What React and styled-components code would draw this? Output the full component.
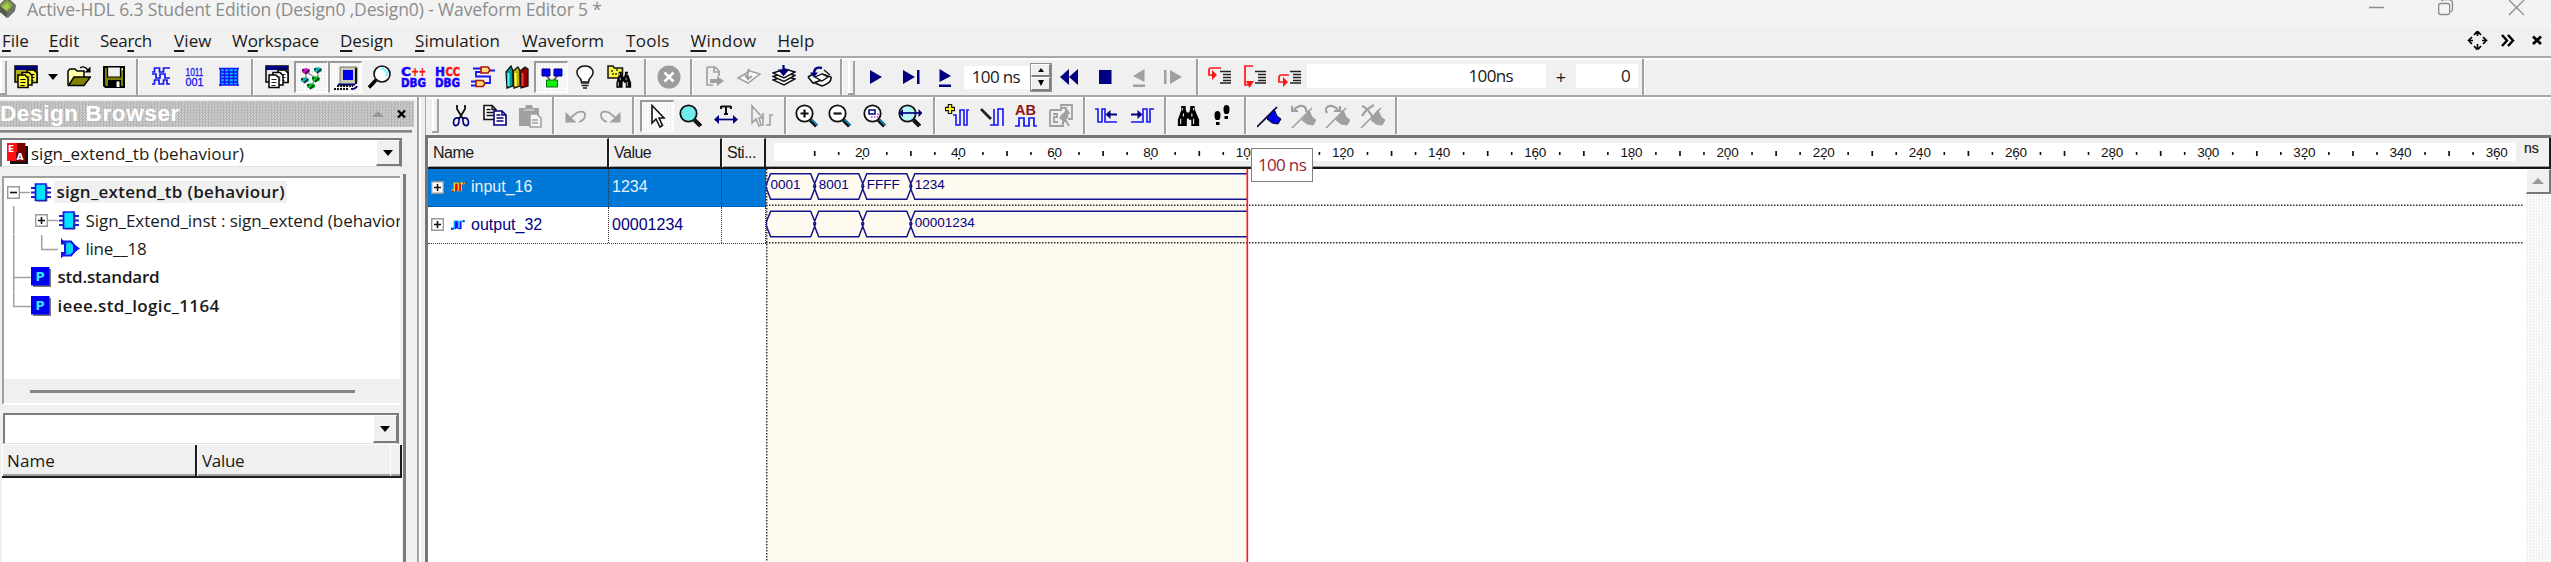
import React from 'react';
import styled, { createGlobalStyle, css } from 'styled-components';

const NAVY = '#000080';
const BLUE = '#1414f5';
const GREY = '#a0a0a0';
const UI = '"Open Sans", "Noto Sans", sans-serif';
const ARIAL = '"Liberation Sans", Arial, sans-serif';

const Global = createGlobalStyle`
  * { box-sizing: border-box; }
  body { margin: 0; background: #f0f0f0; }
  svg { display: block; flex-shrink: 0; }
`;

const dither = css`
  background: repeating-conic-gradient(#f0f0f0 0 25%, #fff 0 50%) 0 0 / 3px 3px;
`;

/* ---------- frame ---------- */
const Frame = styled.div`
  width: 100%;
  height: 562px;
  display: flex;
  flex-direction: column;
  overflow: hidden;
  background: #f0f0f0;
  font: 17px ${UI};
  color: #1a1a1a;
  white-space: pre;
`;
const TitleBar = styled.header`
  flex: 0 0 26px;
  display: flex;
  align-items: flex-start;
  background: #f3f3f3;
  color: #8c8c8c;
`;
const TitleIcon = styled.div`
  width: 27px;
  height: 20px;
`;
const TitleText = styled.div`
  flex: 1;
  font-size: 17.5px;
  line-height: 18px;
  letter-spacing: -0.13px;
`;
const Controls = styled.div`
  display: flex;
  width: 200px;
  height: 20px;
`;
const MenuBar = styled.nav`
  flex: 0 0 30px;
  display: flex;
  align-items: center;
  padding-left: 2px;
  line-height: 30px;
`;
const MenuItem = styled.div`
  width: ${(p) => p.$w}px;
  letter-spacing: ${(p) => p.$ls || 0}px;
  u { text-decoration-thickness: 1.5px; text-underline-offset: 3px; }
`;
const MenuTail = styled.div`
  margin-left: auto;
  width: 93px;
  height: 30px;
`;

/* ---------- toolbars ---------- */
const Bar = styled.div`
  flex: 0 0 ${(p) => p.$h}px;
  display: flex;
  align-items: center;
  border-top: 2px solid #a8a8a8;
  box-shadow: inset 0 2px 0 #fff;
  padding-top: 1px;
`;
const Slot = styled.div`
  flex: 0 0 ${(p) => p.$w}px;
  align-self: stretch;
  display: flex;
  align-items: center;
  justify-content: center;
`;
const Pressed = styled(Slot)`
  align-self: center;
  height: 32px;
  ${dither}
  border: solid #fff;
  border-top-color: #9a9a9a;
  border-left-color: #9a9a9a;
  border-width: 2px 1px 1px 2px;
`;
const Sep = styled.div`
  flex: 0 0 ${(p) => p.$w}px;
  align-self: stretch;
  display: flex;
  justify-content: center;
  &::after {
    content: '';
    width: 3px;
    background: linear-gradient(90deg, #a0a0a0 0 2px, #fff 2px 3px);
  }
`;
const Grip = styled.div`
  flex: 0 0 ${(p) => p.$w}px;
  height: 33px;
  padding-left: ${(p) => p.$pad}px;
  &::after {
    content: '';
    display: block;
    width: 5px;
    height: 32px;
    border: solid #a0a0a0;
    border-width: 0 2px 2px 0;
    box-shadow: inset 2px 0 0 #fff;
  }
`;
const Field = styled.div`
  flex: 0 0 ${(p) => p.$w}px;
  height: ${(p) => p.$h}px;
  margin-bottom: ${(p) => p.$lift || 0}px;
  padding-right: ${(p) => p.$pr}px;
  background: #fff;
  text-align: right;
  line-height: ${(p) => p.$h - 1}px;
  letter-spacing: -0.65px;
`;
const Plus = styled(Slot)`
  font-size: 18px;
`;
const Spinner = styled.div`
  flex: 0 0 22px;
  display: flex;
  flex-direction: column;
  height: 29px;
  border: 1px solid #909090;
`;
const SpinHalf = styled.div`
  flex: 1;
  display: flex;
  align-items: center;
  justify-content: center;
  border: 1px solid #fff;
  border-right: 2px solid #808080;
  border-bottom: 2px solid #808080;
`;

/* ---------- body ---------- */
const Body = styled.div`
  flex: 1;
  display: flex;
  min-height: 0;
  border-top: 2px solid #a8a8a8;
`;
const Sidebar = styled.aside`
  flex: 0 0 417px;
  display: flex;
  flex-direction: column;
  border-top: 2px solid #fff;
`;
const PanelTitle = styled.div`
  width: 414px;
  height: 26px;
  margin-top: 2px;
  display: flex;
  align-items: center;
  background: repeating-conic-gradient(#b4b4b4 0 25%, #cecece 0 50%) 0 0 / 3px 3px;
`;
const PanelName = styled.div`
  flex: 1;
  font: bold 22.5px/26px ${ARIAL};
  letter-spacing: 0.62px;
  color: #fff;
`;
const PanelRule = styled.div`
  width: 412px;
  height: 3px;
  margin: 3px 0 5px;
  background: #858585;
  border-bottom: 1px solid #a8a8a8;
`;
const Combo = styled.div`
  width: ${(p) => p.$w}px;
  height: ${(p) => p.$h}px;
  margin-left: ${(p) => p.$ml}px;
  margin-top: ${(p) => p.$mt || 0}px;
  display: flex;
  align-items: center;
  background: #fff;
  border: 2px solid #7c7c7c;
  border-bottom: 1px solid #e3e3e3;
`;
const ComboText = styled.div`
  flex: 1;
  padding-left: 3px;
`;
const ComboIcon = styled.div`
  display: flex;
  padding-left: 5px;
`;
const DropButton = styled.div`
  width: 24px;
  align-self: stretch;
  display: flex;
  align-items: center;
  justify-content: center;
  background: #f0f0f0;
  border: solid #fff;
  border-width: 1px 0 0 1px;
  border-right: 1px solid #7c7c7c;
  border-bottom: 2px solid #7c7c7c;
`;
const Panes = styled.div`
  flex: 1;
  width: 406px;
  margin-top: 7px;
  display: flex;
  flex-direction: column;
  border-right: 3px solid #7c7c7c;
`;
const Tree = styled.div`
  width: 398px;
  height: 229px;
  margin: 2px 0 0 2px;
  border-top: 2px solid #a0a0a0;
  border-left: 2px solid #a0a0a0;
  border-bottom: 2px solid #fff;
  background: #fff;
  overflow: hidden;
  display: flex;
  flex-direction: column;
`;
const TreeRows = styled.div`
  flex: 1;
`;
const TreeRow = styled.div`
  display: flex;
  align-items: center;
  height: 28.4px;
  overflow: hidden;
`;
const TreeLabel = styled.div`
  height: 22px;
  line-height: 21px;
  padding: 0 2.5px;
  font-weight: ${(p) => (p.$bold ? 600 : 400)};
  letter-spacing: ${(p) => p.$ls || 0}px;
  background: ${(p) => (p.$hot ? '#f0f0f0' : 'transparent')};
`;
const HScroll = styled.div`
  flex: 0 0 24px;
  display: flex;
  align-items: center;
  padding-left: 26px;
  background: #f0f0f0;
  &::after {
    content: '';
    width: 325px;
    height: 3px;
    background: #868686;
  }
`;
const WatchHead = styled.div`
  width: 400px;
  height: 34px;
  margin: 0 0 0 2px;
  display: flex;
  border-bottom: 2px solid #1c1c1c;
  border-top: 1px solid #fff;
`;
const WatchCell = styled.div`
  width: ${(p) => p.$w}px;
  padding-left: ${(p) => (p.$w > 20 ? 4 : 0)}px;
  line-height: 31px;
  letter-spacing: ${(p) => p.$ls || 0}px;
  border-left: 1px solid #fff;
  border-right: ${(p) => (p.$open ? 0 : 2)}px solid #1c1c1c;
  box-shadow: inset 0 -2px 0 #a0a0a0;
`;
const WatchBody = styled.div`
  flex: 1;
  width: 400px;
  margin-left: 2px;
  background: #fff;
`;
const Splitter = styled.div`
  flex: 0 0 8px;
  border-left: 2px solid #a4a4a4;
  box-shadow: inset 2px 0 0 #fff;
`;
const Main = styled.main`
  flex: 1;
  display: flex;
  flex-direction: column;
  min-width: 0;
`;
const MainTools = styled(Bar)`
  border-top: 0;
  border-left: 1px solid #a4a4a4;
  padding: 0 0 1px;
`;
const Editor = styled.section`
  flex: 1;
  min-height: 0;
  display: flex;
  flex-direction: column;
  border-top: 3px solid #757575;
  border-left: 3px solid #757575;
  background: #fff;
`;
const Head = styled.div`
  flex: 0 0 31px;
  height: 31px;
  display: flex;
  background: #f0f0f0;
  border-bottom: 2px solid #161616;
  box-shadow: inset 0 -1px 0 #a0a0a0;
  font: 16px/28px ${ARIAL};
`;
const HeadCell = styled.div`
  flex: 0 0 ${(p) => p.$w}px;
  padding-left: 4px;
  letter-spacing: -0.5px;
  border-left: 1px solid #fff;
  border-top: 1px solid #fff;
  border-right: 2px solid #1c1c1c;
`;
const RulerArea = styled.div`
  flex: 1;
  display: flex;
  align-items: flex-start;
  padding: 5px 0 0 8px;
  border-right: 2px solid #1c1c1c;
`;
const Unit = styled.div`
  padding-left: 8px;
  font: 14px/10px ${ARIAL};
  -webkit-text-stroke: 0.2px;
`;
const Grid = styled.div`
  flex: 1;
  display: flex;
  min-height: 0;
`;
const Names = styled.div`
  flex: 0 0 338px;
`;
const Signal = styled.div`
  height: 37.5px;
  display: flex;
  font: 16px/36px ${ARIAL};
  color: ${(p) => (p.$on ? '#e6f1fb' : NAVY)};
  background: ${(p) => (p.$on ? '#0078d7' : '#fff')};
  border-bottom: 1.5px dotted #333;
`;
const SignalCell = styled.div`
  flex: 0 0 ${(p) => p.$w}px;
  display: flex;
  align-items: center;
  padding-left: 3px;
  border-right: 1.5px dotted #333;
`;
const SignalName = styled.div`
  padding-left: 6px;
`;
const Canvas = styled.div`
  flex: 1;
  min-width: 0;
  height: 392px;
`;
const VScroll = styled.div`
  flex: 0 0 25px;
  ${dither}
  background-color: #f0f0f0;
`;
const ScrollUp = styled.div`
  height: 25px;
  display: flex;
  align-items: center;
  justify-content: center;
  background: #f0f0f0;
  border: 1px solid #fff;
  border-right: 2px solid #777;
  border-bottom: 2px solid #777;
`;
const Anchor = styled.div`
  position: relative;
  width: 0;
  height: 0;
`;
const CursorTip = styled.div`
  position: absolute;
  left: 485px;
  top: -21px;
  width: 62px;
  height: 34px;
  border: 1.5px solid #808080;
  background: #fff;
  color: #9c1c34;
  text-align: center;
  line-height: 32px;
  letter-spacing: -0.65px;
  z-index: 2;
`;

/* ---------- icons ---------- */
const Svg = ({ w = 24, h = 24, children, ...r }) => (
  <svg width={w} height={h} viewBox={`0 0 ${w} ${h}`} fill="none" {...r}>{children}</svg>
);
const Down = ({ s = 10 }) => <Svg w={s} h={6}><path d={`M0 0H${s}L${s / 2} 6Z`} fill="#000" /></Svg>;

const Sheets = ({ fill, back }) => (
  <Svg>
    <path d="M1 1H23V17H1Z" fill={back} stroke="#000" strokeWidth="1.5" />
    <path d="M1 1H23V5H1Z" fill={NAVY} />
    {[[13, 5], [8, 7.5], [4, 10]].map(([x, y]) => (
      <g key={x}>
        <path d={`M${x} ${y}h7l3 3v9.5h-10z`} fill={fill} stroke="#000" strokeWidth="1.5" />
        <path d={`M${x + 2.5} ${y + 4.5}h5m-5 3h5m-5 3h4`} stroke={fill === '#fff' ? '#223' : '#000'} strokeWidth="1.1" />
      </g>
    ))}
  </Svg>
);
const NewIcon = () => <Sheets fill="#fbf53c" back="#b5ad1c" />;
const DocsIcon = () => <Sheets fill="#fff" back="#e8e8ee" />;
const OpenIcon = () => (
  <Svg>
    <path d="M1 20V6l2-2h5l2 2h7v6" fill="#ffffa8" stroke="#000" strokeWidth="1.5" />
    <path d="M1.5 20.5L7 12h16.5L17 20.5Z" fill="#808000" stroke="#000" strokeWidth="1.5" />
    <path d="M13 3q4-3 8 2" stroke="#000" strokeWidth="1.4" /><path d="M23.5 1.500v6h-6z" fill="#000" />
  </Svg>
);
const SaveIcon = () => (
  <Svg>
    <path d="M2 2H22V22H3.500L2 20.500Z" fill="#808000" stroke="#000" strokeWidth="2" />
    <path d="M5.500 2H18.500V12H5.500Z" fill="#f0f0f0" stroke="#000" strokeWidth="1.2" />
    <path d="M6 15H19V22H6Z" fill="#000" /><path d="M14.500 16.500h3V22h-3z" fill="#fff" /><path d="M19.500 3.500h1.500v1.500h-1.500z" fill="#fff" />
  </Svg>
);
const WavesIcon = () => (
  <Svg w={20} h={20}>
    <path d="M1 5H3.500V1H8.500V5H12.500V1H19M1 7H5V11H9V7H14V11H19M1 17H3.500V13H8V17H12.500V13H16V17H19" stroke={BLUE} strokeWidth="1.700" />
  </Svg>
);
const BitsIcon = () => (
  <Svg w={20} h={20}>
    <g fill={BLUE} fontFamily="Liberation Sans" fontSize="11">
      <text x="0.500" y="8.500" textLength="18" lengthAdjust="spacingAndGlyphs" stroke={BLUE} strokeWidth="0.300">1011</text>
      <text x="0.500" y="18.500" textLength="18" lengthAdjust="spacingAndGlyphs" stroke={BLUE} strokeWidth="0.300">001</text>
    </g>
  </Svg>
);
const TableIcon = () => (
  <Svg w={20} h={20}>
    <path d="M1 1H19V18H1Z" fill="#00c0f8" />
    <path d="M0 1.500H20M1 5H19M1 8.300H19M1 11.600H19M1 15H19M0 18H20M1.500 1V19M5.500 1V18M10 1V18M14.500 1V18M18.500 1V19" stroke={BLUE} strokeWidth="1.500" />
  </Svg>
);
const Blob = ({ x, y, c }) => (
  <g><ellipse cx={x} cy={y} rx="4" ry="2.700" fill={c} /><path d={`M${x - 1} ${y + 3}l4-4M${x - 4} ${y - 1}h2`} stroke="#111" strokeWidth="1.300" /></g>
);
const FlowIcon = () => (
  <Svg>
    <path d="M6 6L16 12M6 6V14M18 5V13M16 13L11 20" stroke="#888" strokeWidth="1.200" />
    <Blob x={6} y={5} c="#d010d0" /><Blob x={18} y={4} c="#10b0b0" /><Blob x={5} y={14} c="#10b0b0" /><Blob x={16} y={13} c="#00c020" /><Blob x={11} y={20} c="#00c020" />
  </Svg>
);
const ComputerIcon = () => (
  <Svg>
    <path d="M6 1H23V17L20 19H6Z" fill="#c9c9b4" stroke="#777" />
    <path d="M22 2V18" stroke="#111" strokeWidth="2" />
    <path d="M9 4H19V14H9Z" fill="#0000f0" />
    <path d="M4 18.500H21" stroke={NAVY} strokeWidth="2" />
    <path d="M3 20H19M0 23H15" stroke="#111" strokeWidth="2" strokeDasharray="2 1" />
    <path d="M17 23q5 0 6-3" stroke={NAVY} strokeWidth="2" />
  </Svg>
);
const LensIcon = () => (
  <Svg>
    <circle cx="15" cy="9" r="8" fill="#fff" stroke="#111" strokeWidth="1.600" />
    <path d="M15 3l5 4v4" stroke="#4ff" strokeWidth="2.500" strokeDasharray="2 1" />
    <path d="M9 15L2 22.500" stroke="#000" strokeWidth="3.500" />
  </Svg>
);
const DebugIcon = ({ first, rest }) => (
  <Svg w={26} h={24}>
    <g fontFamily="DejaVu Sans" fontWeight="bold" strokeWidth="0.500">
      <text x="0" y="10.500" fontSize="13" fill="#1400ff" stroke="#1400ff" textLength="10" lengthAdjust="spacingAndGlyphs">{first}</text>
      <text x="10.500" y="10.500" fontSize="12.500" fill="#ff1010" stroke="#ff1010" textLength="14.500" lengthAdjust="spacingAndGlyphs">{rest}</text>
      <text x="0" y="22" fontSize="11.500" fill="#1400ff" stroke="#1400ff" textLength="25" lengthAdjust="spacingAndGlyphs">DBG</text>
    </g>
  </Svg>
);
const CircuitIcon = () => (
  <Svg>
    <path d="M2 3.500h9M17 5.500h7M10 7H5V11.500H19V18H13M0 16.500h5M0 20.500h5" stroke={BLUE} strokeWidth="1.800" />
    <path d="M10 2h7l2 3-2 3h-7zM5 15.500h7l2 3-2 3h-7z" fill="#ffe070" stroke="#b01010" strokeWidth="1.600" />
  </Svg>
);
const BooksIcon = () => (
  <Svg>
    <path d="M1 7L6 1l2 5v15l-6 2z" fill="#009898" stroke="#111" strokeWidth="1.300" /><path d="M3.500 8v13" stroke="#5ff" strokeWidth="2" />
    <path d="M8 6l5-4 2 4v15l-6 2z" fill="#c0b000" stroke="#111" strokeWidth="1.300" /><path d="M10.500 8v13" stroke="#ff6" strokeWidth="2" />
    <path d="M15 6l5-4 3 2v17l-7 2z" fill="#900000" stroke="#111" strokeWidth="1.300" /><path d="M17.500 8v13" stroke="#f33" strokeWidth="2" />
  </Svg>
);
const BlocksIcon = () => (
  <Svg>
    <path d="M6 9L10 14M18 9L14 14" stroke="#555" strokeWidth="1.500" />
    <path d="M2 3h8v7H2zM14 3h8v7h-8z" fill="#0000f0" stroke={NAVY} /><path d="M6.500 14h11v7h-11z" fill="#10f010" stroke="#0a700a" />
  </Svg>
);
const BulbIcon = () => (
  <Svg>
    <path d="M8.500 17q0-3-3-5.500Q3.500 9 4 6 6 1 12 1q6 0 8 5 .5 3-1.500 5.500-3 2.500-3 5.500z" fill="#fff" stroke="#111" strokeWidth="1.500" />
    <path d="M8 18h8M8.500 20.500h7M10 23h4" stroke="#222" strokeWidth="1.500" />
  </Svg>
);
const Binocular = ({ t = '' }) => (
  <g transform={t} fill="#000">
    <path d="M6 2h4v3l1 3h2l1-3V2h4v3l4 10v6h-7v-6h-2l-1-2-1 2v6H3v-6L6 6z" />
    <path d="M7 4v2M17 4v2M5.500 14v5M17 14v5M8 9v3M15.500 9v3" stroke="#eee" strokeWidth="1" />
  </g>
);
const FindFolderIcon = () => (
  <Svg w={26}>
    <path d="M1 1h5l1.500 2h8v10H1z" fill="#fbf53c" stroke="#111" strokeWidth="1.500" /><path d="M4 6h3M9 5h3M5 9h5" stroke="#333" strokeDasharray="2 1" strokeWidth="1.500" />
    <Binocular t="translate(7 5) scale(.78 .85)" />
  </Svg>
);
const StopIcon = () => (
  <Svg><circle cx="12" cy="12" r="11.500" fill="#9c9c9c" /><path d="M7.500 7.500l9 9m0-9l-9 9" stroke="#fff" strokeWidth="2.500" /></Svg>
);
const PageArrowIcon = () => (
  <Svg w={20}>
    <path d="M2 2h8l4 4v5M2 2v18h6M9 2v5h5" stroke={GREY} strokeWidth="1.700" /><path d="M5 14h7v-3l7 5-7 5v-3H5z" fill={GREY} />
  </Svg>
);
const TraceIcon = () => (
  <Svg>
    <path d="M1 13L13 6l10 3-12 9z" stroke={GREY} strokeWidth="1.500" fill="#f8f8f8" /><path d="M12 4q-2 3-1 9M8 10l3 4 4-3" stroke={GREY} strokeWidth="2" />
  </Svg>
);
const StackIcon = () => (
  <Svg>
    {[10, 6.500, 3].map((y) => (
      <path key={y} d={`M1 ${5 + y}l12-4 10 3-11 6z`} fill="#fff" stroke="#111" strokeWidth="1.500" />
    ))}
    <path d="M11.500 0v8M8 5.500l3.500 4 3.500-4z" stroke={NAVY} strokeWidth="2.200" fill={NAVY} />
  </Svg>
);
const OverIcon = () => (
  <Svg w={25}>
    <path d="M1 12l5-3M1 12l5 6 9-3M15 9l9 3q1 6-9 9l-7-3" fill="#fff" stroke="#111" strokeWidth="1.600" /><path d="M8 12l7-3 6 3-6 4zM17 5l6 5" fill="#fff" stroke="#111" strokeWidth="1.300" />
    <path d="M15 3q-8-2-8 6" stroke={NAVY} strokeWidth="2.400" /><path d="M3 7.500h8l-4 5z" fill={NAVY} />
  </Svg>
);
const PlayIcon = () => <Svg w={14} h={14}><path d="M1 0L13 7 1 14Z" fill={NAVY} /></Svg>;
const PlayToIcon = () => <Svg w={17} h={14}><path d="M0 0L12 7 0 14Z M14 0h2.500v14H14z" fill={NAVY} /></Svg>;
const PlayForIcon = () => <Svg w={14} h={22}><path d="M1.500 3L13 10 1.500 16ZM1 18.500h12V21H1z" fill={NAVY} /></Svg>;
const RewindIcon = () => <Svg w={19} h={16}><path d="M9 0V16L0 8ZM18 0V16L9 8Z" fill={NAVY} /></Svg>;
const SquareIcon = () => <Svg w={14} h={14}><path d="M1 0H13.500V14H1Z" fill={NAVY} /></Svg>;
const BackIcon = () => <Svg w={14} h={22}><path d="M12.500 3v13L1 10ZM1 18.500h12V21H1z" fill={GREY} /></Svg>;
const StepIcon = () => <Svg w={18} h={14}><path d="M6 0L18 7 6 14ZM0 0h2.500v14H0z" fill={GREY} /></Svg>;
const TraceLines = ({ d, head }) => (
  <Svg w={25}>
    <path d={d} stroke="#ff1414" strokeWidth="1.700" /><path d={head} fill="#ff1414" />
    <path d="M12 7.500h11M15 10.500h8M15 13.500h8M15 16.500h8M12 19h11" stroke="#222" strokeWidth="1.500" transform="translate(0 -1)" />
  </Svg>
);
const CutIcon = () => (
  <Svg>
    <path d="M8 1v4l6 10M16 1v4l-6 10" stroke="#111" strokeWidth="1.800" />
    <path d="M10 14q-5-1-5.500 4 0 4 3 3.500 3-1 2.500-7.500M14 14q5-1 5.500 4 0 4-3 3.500-3-1-2.500-7.500" stroke={NAVY} strokeWidth="1.700" />
  </Svg>
);
const Page = ({ x, y, c }) => (
  <g><path d={`M${x} ${y}h8l4 4v10H${x}z`} fill="#fff" stroke={c} strokeWidth="1.600" /><path d={`M${x + 2.5} ${y + 4}h4m-4 3h7m-7 3h7M${x + 8} ${y}v4h4`} stroke={c} strokeWidth="1.400" /></g>
);
const CopyIcon = () => <Svg><Page x={1} y={1.500} c="#111" /><Page x={11} y={7} c={NAVY} /></Svg>;
const PasteIcon = () => (
  <Svg><path d="M1 4h6l1-3h6l1 3h6v18H1z" fill={GREY} /><path d="M12 10h7l4 4v9H12z" fill="#f4f4f4" stroke={GREY} strokeWidth="1.500" /><path d="M14 16h6m-6 3h6" stroke={GREY} strokeWidth="1.500" /><path d="M6 6h10" stroke="#ddd" strokeWidth="1.200" /></Svg>
);
const Undo = () => <><path d="M5 15L13 8.500q8-2.500 8 2.500 0 5-6 7" stroke={GREY} strokeWidth="1.800" /><path d="M1.500 8v10.500h11z" fill={GREY} /></>;
const UndoIcon = () => <Svg><Undo /></Svg>;
const RedoIcon = () => <Svg><g transform="translate(24 0) scale(-1 1)"><Undo /></g></Svg>;
const PointerIcon = () => <Svg w={16}><path d="M2 1.500V19l4-4 4 8 2.500-1.500L9 14h5z" fill="#fff" stroke="#111" strokeWidth="1.600" /></Svg>;
const ZoomIcon = ({ children, fill = '#fff', handle = '#0898d8' }) => (
  <Svg><circle cx="9.500" cy="9.500" r="8.200" fill={fill} stroke="#111" strokeWidth="1.800" /><path d="M15.500 16L21.500 22" stroke="#111" strokeWidth="4" /><path d="M16.500 15.500L22.500 21.500" stroke={handle} strokeWidth="1.600" />{children}</Svg>
);
const TimeIcon = () => (
  <Svg><path d="M7 2.500h10M12 2.500V10M10 10h4M7 2v3M17 2v3" stroke="#111" strokeWidth="2" /><path d="M3 15.500H21" stroke={NAVY} strokeWidth="1.700" /><path d="M0 15.500l5-4.500v9zM24 15.500l-5-4.500v9z" fill={NAVY} /></Svg>
);
const PickIcon = () => <Svg><path d="M2 2v17l4-4 3 7 2-1-2-7h4zM13 9v13M16 21h4V11h3M20 21v-9" stroke={GREY} strokeWidth="1.600" /></Svg>;
const AddWaveIcon = () => <Svg><path d="M8 12h3v10h4V7h4v15h3V7h2" stroke={BLUE} strokeWidth="1.600" transform="translate(0 -1)" /><path d="M5 0v10M0 5h10" stroke="#111" strokeWidth="4.500" /><path d="M5 1v8M1 5h8" stroke="#ffee20" strokeWidth="2.200" /></Svg>;
const EditWaveIcon = () => <Svg><path d="M1 5l10 10" stroke="#222" strokeWidth="3" /><path d="M2 4l9 9" stroke="#aaa" strokeWidth=".8" /><path d="M10 21h4V5M14 21h1M14 5v16h4V5h5v17" stroke={BLUE} strokeWidth="1.600" /></Svg>;
const AbIcon = () => (
  <Svg><text x="1" y="11" fontFamily="Liberation Sans" fontWeight="bold" fontSize="14" fill="#901414" textLength="21" lengthAdjust="spacingAndGlyphs">AB</text><path d="M1 22h4v-8h5v8h5v-8h5v8h3" stroke={BLUE} strokeWidth="1.700" /></Svg>
);
const PropsIcon = () => <Svg><path d="M1 6h11V1h11v14h-4M1 6v16h13v-6M4 10h4v3H5v5h4M12 4h5v4M13 10l7 12M19 12l-6 8" stroke={GREY} strokeWidth="1.800" /><path d="M10 14l8-9 3 4-7 8z" fill={GREY} /></Svg>;
const EdgeIcon = () => <><path d="M0 5h3v13h4V5h3v13h12" stroke={BLUE} strokeWidth="1.600" /><path d="M13 10.500h9" stroke={NAVY} strokeWidth="2" /><path d="M10.500 10.500l5-4.500v9z" fill={NAVY} /></>;
const PrevEdgeIcon = () => <Svg><EdgeIcon /></Svg>;
const NextEdgeIcon = () => (
  <Svg><path d="M1 18h12V5h4v13h3V5h4" stroke={BLUE} strokeWidth="1.600" /><path d="M1 10.500h8" stroke={NAVY} strokeWidth="2" /><path d="M12.500 10.500L7.500 6v9z" fill={NAVY} /></Svg>
);
const BinocularIcon = () => <Svg><Binocular t="translate(-1.500 0) scale(1.120 1.050)" /></Svg>;
const FeetIcon = () => <Svg w={18}><path d="M1.500 11q0-4 3-4t3 4-1.500 5h-3q-1.500-1-1.500-5zM3 18h3.500v3H3zM10.500 5q0-4 3-4t3 4-1.500 5h-3q-1.500-1-1.500-5zM11.500 12H15v3h-3.500z" fill="#000" /></Svg>;
const Flag = ({ c, pole }) => <><path d="M0 23L20 3" stroke={pole} strokeWidth="1.600" /><path d="M17 5l3 7 4 3-3 5-6-1-5-4z" fill={c} stroke={pole} strokeWidth="1" /></>;
const FlagIcon = () => <Svg w={25}><Flag c="#0000e8" pole="#050530" /></Svg>;
const GreyFlagIcon = ({ d }) => <Svg w={25}><g transform="translate(1 1)"><Flag c={GREY} pole={GREY} /></g><path d={d} stroke={GREY} strokeWidth="2.200" /></Svg>;

const Expander = ({ plus }) => (
  <Svg w={13} h={13}><path d="M.7.700H12.300V12.300H.7Z" fill="#fff" stroke="#999" strokeWidth="1.400" /><path d={plus ? 'M3 6.500h7M6.500 3v7' : 'M3 6.500h7'} stroke="#111" strokeWidth="1.600" /></Svg>
);
const ChipIcon = () => (
  <Svg w={22} h={19}><path d="M1 5h20M1 9.500h20M1 14h20" stroke="#2020c0" strokeWidth="2" /><path d="M5.500 1H16V17.500H5.500Z" fill="#00e4ff" stroke={BLUE} strokeWidth="1.700" /><path d="M17 2v16H7" stroke="#335" strokeWidth=".8" /></Svg>
);
const ProcIcon = () => (
  <Svg w={22} h={21}><path d="M4 3.500h8l6 7-6 7H4l2-3v-8z" fill="#00d8f8" stroke={BLUE} strokeWidth="2" /><path d="M2 0v6.500h6zM21 10.500l-7-5v10zM2 20.500v-6.500h6z" fill={BLUE} /></Svg>
);
const PackIcon = () => (
  <Svg w={20} h={20}><path d="M2 2h18v18H2z" fill="#777" /><path d="M0 0h18.500v18.500H0z" fill="#0000f0" /><text x="4.500" y="13.500" fontFamily="DejaVu Sans" fontWeight="bold" fontSize="12.500" fill="#30e8ff">P</text></Svg>
);
const EntityIcon = () => (
  <Svg w={21} h={21}>
    <path d="M3 3h18v18H3z" fill="#111" /><path d="M0 0h10v18H0z" fill="#ff1010" /><path d="M10 0h8.500v18.500H10zM9 9h9v9.500H9z" fill="#7c0000" />
    <g fontFamily="DejaVu Sans" fontWeight="bold" fontSize="9" fill="#fff"><text x="1" y="8.500">E</text><text x="9.500" y="17">A</text></g>
  </Svg>
);
const SignalIcon = ({ on }) => (
  <Svg w={14} h={10}><path d="M0 8.300h3.500v-7h3.500v7h3v-7h4" stroke={on ? '#ffe020' : '#10a8ff'} strokeWidth="1.700" /><path d="M4.700 9V1.500M8 9V8M9.300 9V1.500M12 1h1.500M0 9h2.500M6 1.500V8" stroke={on ? '#e01010' : '#1010ff'} strokeWidth="1.500" /></Svg>
);

/* ---------- data ---------- */
const MENUS = [
  ['', 'F', 'ile', 47, 0], ['', 'E', 'dit', 51, 0], ['Sea', 'r', 'ch', 74, -0.31], ['', 'V', 'iew', 58, 0.1],
  ['W', 'o', 'rkspace', 108, -0.05], ['', 'D', 'esign', 75, -0.1], ['', 'S', 'imulation', 107, 0.05],
  ['', 'W', 'aveform', 104, 0.02], ['', 'T', 'ools', 64.5, 0.3], ['', 'W', 'indow', 87, 0.3], ['', 'H', 'elp', 60, 0],
];

/* time axis: 4.807 px per ns, origin at the left edge of the canvas */
const at = (t) => 0.6 + t * 4.807;

const Ruler = () => {
  const marks = [];
  for (let t = 10; t <= 360; t += 5) marks.push(t);
  return (
    <svg width="1742" height="18" viewBox="8 0 1742 18">
      <rect x="8" width="1742" height="18" fill="#fff" />
      {marks.map((t) => {
        const x = at(t);
        if (t % 20 === 0) {
          return (
            <g key={t}>
              <text x={x - 0.5} y="13.500" textAnchor="middle" fontFamily="Liberation Sans" fontSize="13.500" letterSpacing="-0.2" fill="#111">{t}</text>
              <rect x={x - 0.8} y="15" width="1.600" height="1.500" fill="#111" />
            </g>
          );
        }
        return t % 10 === 0
          ? <rect key={t} x={x - 0.8} y="8" width="1.700" height="5" fill="#111" />
          : <rect key={t} x={x - 0.8} y="9" width="1.600" height="3" fill="#111" />;
      })}
    </svg>
  );
};

const Bus = ({ y, cuts, labels }) => {
  const top = y;
  const bot = y + 25.5;
  const mid = y + 12.5;
  const segs = cuts.map((c, i) => {
    const x0 = at(c);
    const last = i === cuts.length - 1;
    const x1 = last ? at(100) : at(cuts[i + 1]);
    return last
      ? `M${x1} ${top}H${x0 + 4}L${x0 - 1} ${mid}L${x0 + 4} ${bot}H${x1}`
      : `M${x0 + 4} ${top}H${x1 - 4}L${x1 + 1} ${mid}L${x1 - 4} ${bot}H${x0 + 4}L${x0 - 1} ${mid}Z`;
  });
  return (
    <g>
      <path d={segs.join('')} stroke="#14148c" strokeWidth="1.500" fill="none" />
      {labels.map((l, i) => (
        <text key={i} x={at(cuts[i]) + 4} y={y + 15.700} fontFamily="Liberation Sans" fontSize="13.500" fill={NAVY}>{l}</text>
      ))}
    </g>
  );
};

const Waves = () => (
  <svg width="1758" height="394" viewBox="0 0 1758 394">
    <rect width={at(100)} height="394" fill="#fffaf0" />
    <path d="M0.700 0V394" stroke="#333" strokeWidth="1.500" strokeDasharray="1.500 1.500" />
    <path d="M0 36.200H1758M0 73.700H1758" stroke="#333" strokeWidth="1.500" strokeDasharray="1.500 1.500" />
    <Bus y={4.700} cuts={[0, 10, 20, 30]} labels={['0001', '8001', 'FFFF', '1234']} />
    <Bus y={42.200} cuts={[0, 10, 20, 30]} labels={['', '', '', '00001234']} />
    <path d={`M${at(100)} 0V394`} stroke="#ff2020" strokeWidth="1.700" />
  </svg>
);

const Stem = ({ w, d }) => (
  <svg width={w} height="28.400" viewBox={`0 0 ${w} 28.400`} fill="none"><path d={d} stroke="#a0a0a0" strokeWidth="1.500" /></svg>
);

const T = ({ w, children }) => <Slot $w={w}>{children}</Slot>;

export default function App() {
  return (
    <Frame>
      <Global />
      <TitleBar>
        <TitleIcon>
          <svg width="18" height="19" viewBox="0 0 18 19">
            <path d="M-2 6L7-3 16 5 15 11 8 18 0 12Z" fill="#6e7268" /><path d="M0 6L7 0 13 5 7 12Z" fill="#8ba83c" /><path d="M2 7l5-4 3 4-4 3z" fill="#a8cc50" /><path d="M7 12v6l-7-6V6z" fill="#55594f" />
          </svg>
        </TitleIcon>
        <TitleText>Active-HDL 6.3 Student Edition (Design0 ,Design0) - Waveform Editor 5 *</TitleText>
        <Controls>
          <svg width="200" height="20" viewBox="2351 0 200 20" fill="none" stroke="#8c8c8c" strokeWidth="1.300">
            <path d="M2369 7.500h15M2509 0l15 15m0-15l-15 15" />
            <rect x="2438.700" y="3.500" width="11" height="11" rx="2" /><path d="M2441.500 1q1-1.500 3-1.500h4q4 0 4 4v5q0 2.500-1.500 3.500" />
          </svg>
        </Controls>
      </TitleBar>
      <MenuBar>
        {MENUS.map(([a, u, b, w, ls]) => (
          <MenuItem key={a + u + b} $w={w} $ls={ls}>{a}<u>{u}</u>{b}</MenuItem>
        ))}
        <MenuTail>
          <svg width="93" height="30" viewBox="2458 26 93 30" fill="none" stroke="#000">
            <path d="M2477.500 31v6M2477.500 44v6M2468 40.500h5M2482 40.500h5M2474 35l3.500-4 3.500 4M2474 46l3.500 4 3.500-4M2472 37l-3.500 3.500 3.500 3.500M2483 37l3.500 3.500-3.500 3.500" strokeWidth="1.700" strokeDasharray="5 1" />
            <path d="M2502 35l5 5.500-5 5.500M2508 35l5 5.500-5 5.500" strokeWidth="2.400" />
            <path d="M2533 36.500l8 7.500m0-7.500l-8 7.500" strokeWidth="2.800" />
          </svg>
        </MenuTail>
      </MenuBar>

      <Bar $h={39}>
        <Grip $w={8} $pad={-1} />
        <T w={36}><NewIcon /></T><T w={18}><Down /></T><T w={34}><OpenIcon /></T><T w={35}><SaveIcon /></T><Sep $w={12} />
        <T w={35}><WavesIcon /></T><T w={34}><BitsIcon /></T><T w={34}><TableIcon /></T><Sep $w={13} />
        <T w={35}><DocsIcon /></T><Pressed $w={34}><FlowIcon /></Pressed><Pressed $w={34}><ComputerIcon /></Pressed>
        <T w={34}><LensIcon /></T><T w={35}><DebugIcon first="C" rest="++" /></T><T w={34}><DebugIcon first="H" rest="CC" /></T>
        <T w={35}><CircuitIcon /></T><T w={34}><BooksIcon /></T><Pressed $w={34}><BlocksIcon /></Pressed><T w={34}><BulbIcon /></T>
        <T w={36}><FindFolderIcon /></T><Sep $w={14} /><T w={33}><StopIcon /></T><Sep $w={12} />
        <T w={36}><PageArrowIcon /></T><T w={31}><TraceIcon /></T><T w={39}><StackIcon /></T><T w={32}><OverIcon /></T><Sep $w={12} />
        <Grip $w={8} $pad={1} />
        <T w={41}><PlayIcon /></T><T w={30}><PlayToIcon /></T><T w={38}><PlayForIcon /></T>
        <Field $w={66} $h={23} $pr={10}>100 ns</Field>
        <Spinner>
          <SpinHalf><Svg w={6} h={4}><path d="M0 4H6L3 0Z" fill="#000" /></Svg></SpinHalf>
          <SpinHalf><Down s={6} /></SpinHalf>
        </Spinner>
        <T w={34}><RewindIcon /></T><T w={38}><SquareIcon /></T><T w={30}><BackIcon /></T><T w={38}><StepIcon /></T><Sep $w={11} />
        <T w={34}><TraceLines d="M13 3H3q-2 0-2 2v5h4" head="M4 5l5 5-5 5z" /></T>
        <T w={36}><TraceLines d="M10 1H2V20h4" head="M3 16h8l-4.500 7z" /></T>
        <T w={34}><TraceLines d="M11 10H3q-2 0-2 3v4h5" head="M5 12l5 5-5 5z" /></T>
        <Field $w={239} $h={24} $pr={33} $lift={2}>100ns</Field><Plus $w={30}>+</Plus><Field $w={62} $h={24} $pr={8} $lift={2}>0</Field><Sep $w={10} />
      </Bar>

      <Body>
        <Sidebar>
          <PanelTitle>
            <PanelName>Design Browser</PanelName>
            <Svg w={42} h={14}><path d="M0 10H12L6 4Z" fill="#999" /><path d="M26 3.500l7 7m0-7l-7 7" stroke="#000" strokeWidth="2.400" /></Svg>
          </PanelTitle>
          <PanelRule />
          <Combo $w={402} $h={29} $ml={0}>
            <ComboIcon><EntityIcon /></ComboIcon>
            <ComboText>sign_extend_tb (behaviour)</ComboText>
            <DropButton><Down /></DropButton>
          </Combo>
          <Panes>
            <Tree>
              <TreeRows>
                <TreeRow>
                  <Svg w={3} h={13} /><Expander /><Stem w={10} d="M0 14.500H10" /><ChipIcon />
                  <Svg w={2} h={13} /><TreeLabel $bold $hot $ls={0.3}>sign_extend_tb (behaviour)</TreeLabel>
                </TreeRow>
                <TreeRow>
                  <Stem w={31} d="M9.700 0V28.400" /><Expander plus /><Stem w={10} d="M0 14.500H10" /><ChipIcon />
                  <Svg w={3} h={13} /><TreeLabel $ls={-0.05}>Sign_Extend_inst : sign_extend (behavior</TreeLabel>
                </TreeRow>
                <TreeRow>
                  <Stem w={55} d="M9.700 0V28.400M37.700 0V14.500H54" /><ProcIcon />
                  <Svg w={2} h={13} /><TreeLabel $ls={-0.24}>line__18</TreeLabel>
                </TreeRow>
                <TreeRow>
                  <Stem w={27} d="M9.700 0V28.400M9.700 14.500H27" /><PackIcon />
                  <Svg w={4} h={13} /><TreeLabel $bold $ls={-0.19}>std.standard</TreeLabel>
                </TreeRow>
                <TreeRow>
                  <Stem w={27} d="M9.700 0V14.500H27" /><PackIcon />
                  <Svg w={4} h={13} /><TreeLabel $bold $ls={0.35}>ieee.std_logic_1164</TreeLabel>
                </TreeRow>
              </TreeRows>
              <HScroll />
            </Tree>
            <Combo $w={396} $h={31} $ml={3} $mt={8}>
              <ComboText />
              <DropButton><Down /></DropButton>
            </Combo>
            <WatchHead>
              <WatchCell $w={195} $ls={0.12}>Name</WatchCell>
              <WatchCell $w={193} $ls={-0.3} $open>Value</WatchCell>
              <WatchCell $w={12} />
            </WatchHead>
            <WatchBody />
          </Panes>
        </Sidebar>
        <Splitter />
        <Main>
          <MainTools $h={38}>
            <Grip $w={18} $pad={6} />
            <T w={34}><CutIcon /></T><T w={34}><CopyIcon /></T><T w={35}><PasteIcon /></T><Sep $w={12} />
            <T w={34}><UndoIcon /></T><T w={34}><RedoIcon /></T><Sep $w={13} />
            <Pressed $w={34}><PointerIcon /></Pressed>
            <T w={34}><ZoomIcon fill="#70ecec" handle="#111" /></T><T w={35}><TimeIcon /></T><T w={38}><PickIcon /></T><Sep $w={9} />
            <T w={33}><ZoomIcon><path d="M5.500 9.500h8m-4-4v8" stroke="#111" strokeWidth="2.200" /></ZoomIcon></T>
            <T w={34}><ZoomIcon><path d="M5.500 9.500h8" stroke="#111" strokeWidth="2.200" /></ZoomIcon></T>
            <T w={35}><ZoomIcon><path d="M6 6h6v4H6z" stroke={NAVY} strokeWidth="1.500" /><path d="M8 13h7V9" stroke="#b030d0" strokeWidth="1.500" strokeDasharray="1.500 1.500" /></ZoomIcon></T>
            <T w={36}><ZoomIcon fill="#b8f6f8" handle="#111"><path d="M3 9h20" stroke={NAVY} strokeWidth="1.700" /><path d="M1 9l4-4v8zM24.500 9l-4-4v8z" fill={NAVY} /></ZoomIcon></T><Sep $w={12} />
            <T w={34}><AddWaveIcon /></T><T w={35}><EditWaveIcon /></T><T w={34}><AbIcon /></T><T w={35}><PropsIcon /></T><Sep $w={12} />
            <T w={33}><PrevEdgeIcon /></T><T w={37}><NextEdgeIcon /></T><Sep $w={11} />
            <T w={33}><BinocularIcon /></T><T w={35}><FeetIcon /></T><Sep $w={13} />
            <T w={34}><FlagIcon /></T>
            <T w={34}><GreyFlagIcon d="M1 2v5h6M3 6q4-5 9-4 4 2 3 6" /></T>
            <T w={35}><GreyFlagIcon d="M15 2v5H9M13 6Q9 1 4 2-1 4 2 9" /></T>
            <T w={35}><GreyFlagIcon d="M2 2q6 2 11 12M14 1Q6 5 2 12" /></T><Sep $w={12} />
          </MainTools>
          <Editor>
            <Head>
              <HeadCell $w={181}>Name</HeadCell>
              <HeadCell $w={113}>Value</HeadCell>
              <HeadCell $w={44}>Sti...</HeadCell>
              <RulerArea><Ruler /><Unit>ns</Unit></RulerArea>
            </Head>
            <Grid>
              <Names>
                <Signal $on>
                  <SignalCell $w={181}><Expander plus /><Svg w={7} h={10} /><SignalIcon on /><SignalName>input_16</SignalName></SignalCell>
                  <SignalCell $w={113}>1234</SignalCell>
                  <SignalCell $w={44} />
                </Signal>
                <Signal>
                  <SignalCell $w={181}><Expander plus /><Svg w={7} h={10} /><SignalIcon /><SignalName>output_32</SignalName></SignalCell>
                  <SignalCell $w={113}>00001234</SignalCell>
                  <SignalCell $w={44} />
                </Signal>
              </Names>
              <Anchor><CursorTip>100 ns</CursorTip></Anchor>
              <Canvas><Waves /></Canvas>
              <VScroll><ScrollUp><Svg w={12} h={6}><path d="M0 6H12L6 0Z" fill="#999" /></Svg></ScrollUp></VScroll>
            </Grid>
          </Editor>
        </Main>
      </Body>
    </Frame>
  );
}
